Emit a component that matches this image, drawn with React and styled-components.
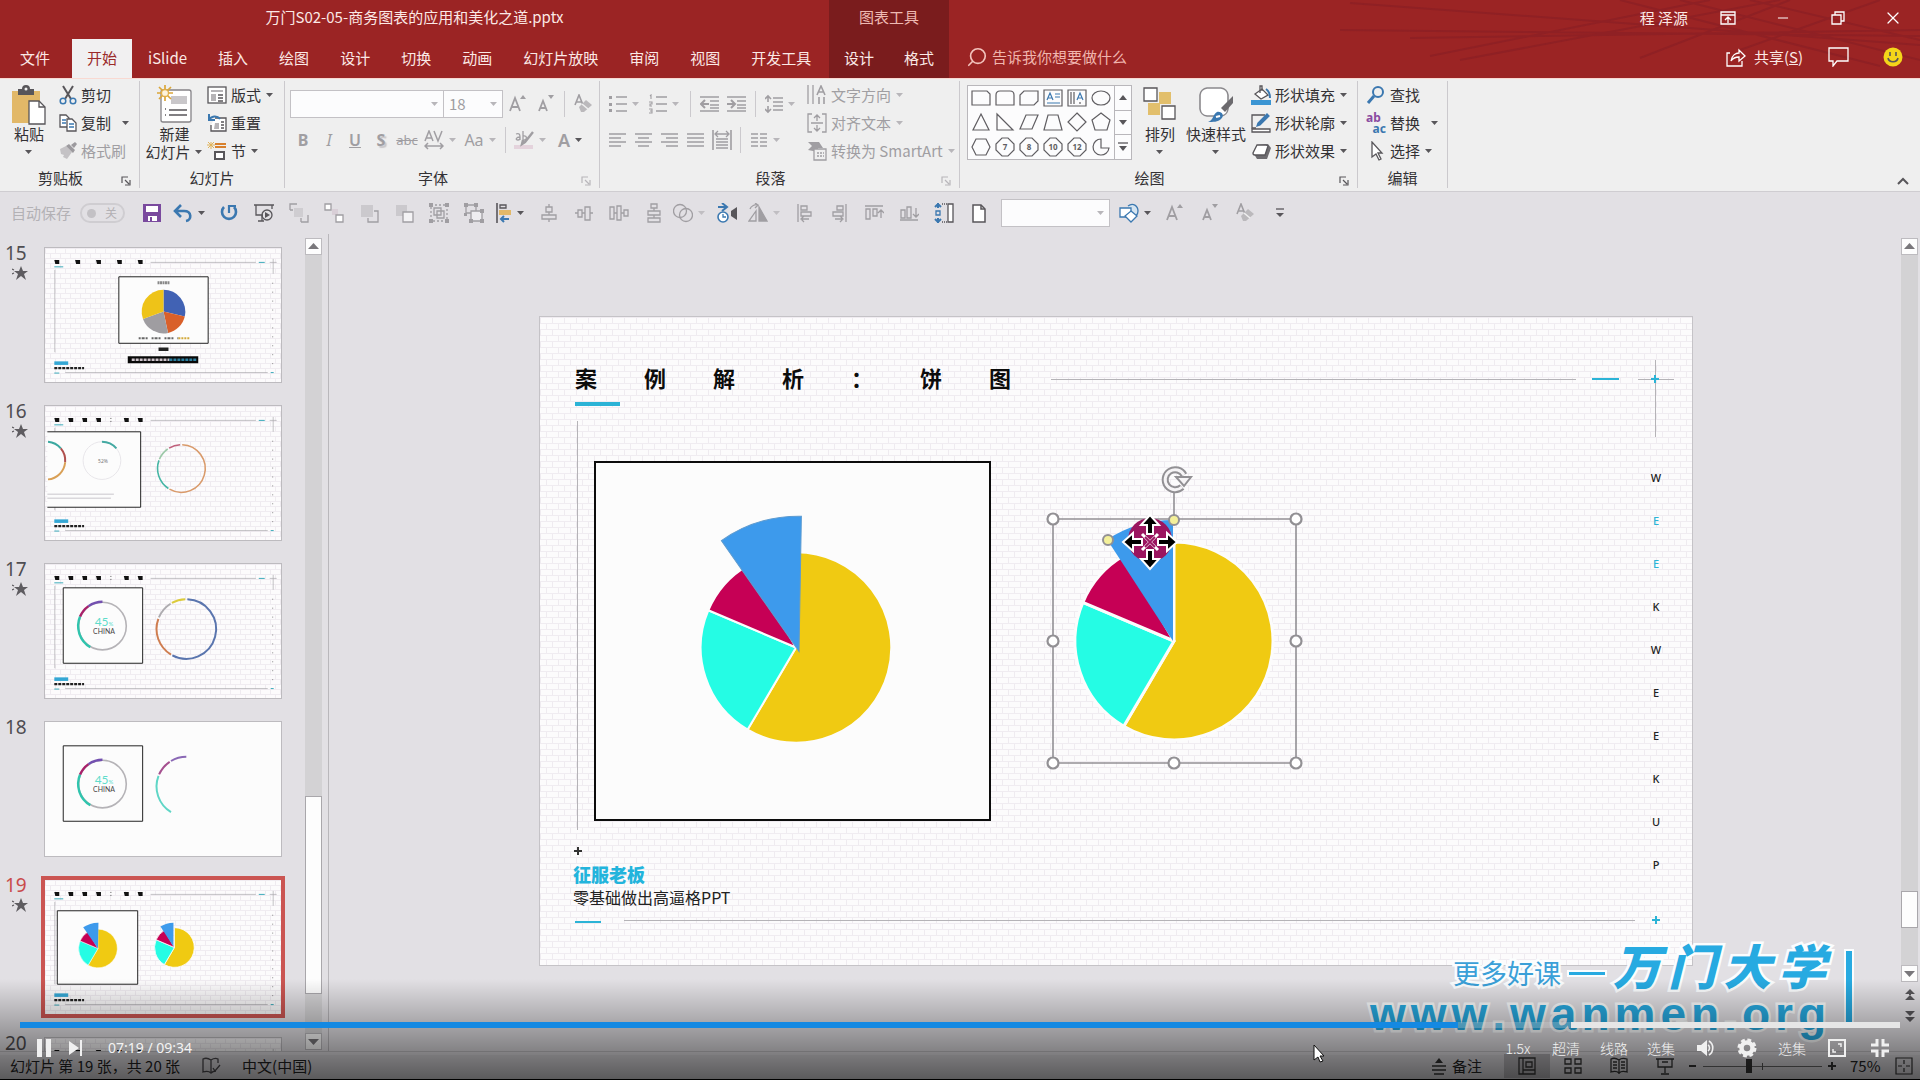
import React from 'react'
import styled, { createGlobalStyle } from 'styled-components'
import { Search, Minus, X } from 'lucide-react'

const GREY = '#a09ea2'
const DARK = '#58565a'
const BLUE = '#3b78b0'
const CYAN = '#2bb3d6'
const PIE = { yellow: '#f0ca12', teal: '#25fce4', crimson: '#c60055', blue: '#3d9aec' }

/* ---------- helpers ---------- */

const point = (cx, cy, r, deg) => {
    const a = (deg * Math.PI) / 180
    return `${(cx + r * Math.sin(a)).toFixed(2)} ${(cy - r * Math.cos(a)).toFixed(2)}`
}

const wedge = (cx, cy, r, from, to) =>
    `M${cx} ${cy}L${point(cx, cy, r, from)}A${r} ${r} 0 ${to - from > 180 ? 1 : 0} 1 ${point(cx, cy, r, to)}Z`

const arc = (cx, cy, r, from, to) =>
    `M${point(cx, cy, r, from)}A${r} ${r} 0 ${to - from > 180 ? 1 : 0} 1 ${point(cx, cy, r, to)}`

const Icon = ({ w = 20, h = 20, c = GREY, sw = 1.3, children }) => (
    <svg width={w} height={h} viewBox={`0 0 ${w} ${h}`} fill="none" stroke={c} strokeWidth={sw} aria-hidden="true">
        {children}
    </svg>
)

const Caret = ({ c = DARK }) => (
    <Icon w={10} h={6} c="none"><path d="M1 1h7L4.500 5z" fill={c} /></Icon>
)

/* ---------- ribbon icons ---------- */

const PasteIcon = () => (
    <Icon w={36} h={40} c="none">
        <path d="M1 6h28v32H1z" fill="#e2b868" />
        <path d="M7 4h4a4 4 0 0 1 8 0h4v6H7z" fill={DARK} />
        <circle cx="15" cy="4" r="1.500" fill="#efefef" />
        <path d="M18 16h10l6 6v17H18z" fill="#fff" stroke={DARK} strokeWidth="1.300" />
        <path d="M28 16v6h6" stroke={DARK} strokeWidth="1.300" />
    </Icon>
)
const CutIcon = () => (
    <Icon w={18} c={DARK} sw={2}>
        <path d="M4 1l8 13M14 1L6 14" />
        <circle cx="4" cy="16" r="2.800" stroke={BLUE} strokeWidth="1.500" />
        <circle cx="14" cy="16" r="2.800" stroke={BLUE} strokeWidth="1.500" />
    </Icon>
)
const CopyIcon = () => (
    <Icon w={18} c={DARK}>
        <path d="M1 2h6l3 3v9H1z" fill="#fff" />
        <path d="M8 6h5l4 4v8H8z" fill="#fff" />
        <path d="M3 7h4M3 10h4M10 11h5M10 14h5" stroke={BLUE} />
    </Icon>
)
const BrushIcon = () => (
    <Icon w={18} c="none">
        <path d="M1 8l6-3 6 6-5 7-4-2 1-2-3-1z" fill="#c4c2c5" />
        <path d="M7 5l3-2 6 6-2 3zM12 4l4-3 2 2-3 4z" fill="#9c9a9e" />
    </Icon>
)
const NewSlideIcon = () => (
    <Icon w={36} h={40} c={DARK}>
        <rect x="4" y="5" width="30" height="32" rx="2" fill="#fff" stroke="#858387" />
        <path d="M14 11h16v8H14z" fill="#c9c7ca" stroke="none" />
        <path d="M12 25h18M12 30h18" strokeWidth="1.600" />
        <path d="M8 24h1M8 30h1" strokeWidth="1.600" />
        <path d="M8 0v16M0 8h16M2 2l12 12M14 2L2 14" stroke="#dba73a" strokeWidth="1.700" />
        <circle cx="8" cy="8" r="3.500" fill="#fdf3dc" stroke="#e0ae48" />
    </Icon>
)
const LayoutIcon = () => (
    <Icon c={DARK}>
        <rect x="1" y="2" width="18" height="16" fill="#fff" />
        <path d="M4 5h12v2H4zM4 9h5v7H4z" fill="#b6b4b7" stroke="none" />
        <path d="M11 10h5M11 13h5M11 16h5" />
    </Icon>
)
const ResetIcon = () => (
    <Icon c={DARK}>
        <path d="M8 5h11v13H4v-6" fill="#fff" />
        <path d="M8 10h4v6H7z" fill="#b6b4b7" stroke="none" />
        <path d="M14 9h3M14 12h3M14 15h3" />
        <path d="M2 1v6h6M2 7c2-4 8-5 11-1" stroke={BLUE} strokeWidth="2" />
    </Icon>
)
const SectionIcon = () => (
    <Icon c={DARK}>
        <path d="M8 3h11M8 6h11" stroke="#d8812e" strokeWidth="2" />
        <path d="M8 11h9v7H8z" fill="#fff" strokeWidth="2" />
        <path d="M4 1v7M0 4h8M1 1l6 6M7 1L1 7" stroke="#e0b35a" strokeWidth="1" />
    </Icon>
)
const Glyph = styled.span`
    font-family: "Noto Sans", "Noto Sans CJK SC", sans-serif;
    font-size: ${(p) => p.$size || 16}px;
    line-height: 20px;
    font-weight: ${(p) => p.$weight || 400};
    font-style: ${(p) => (p.$italic ? 'italic' : 'normal')};
    text-decoration: ${(p) => p.$line || 'none'};
    text-shadow: ${(p) => (p.$shadow ? '2px 2px 1px #c9c7ca' : 'none')};
    color: ${GREY};
`
const FontSizeIcon = ({ up }) => (
    <Icon w={20} h={20} sw={1.8}>
        <path d={up ? 'M2 17L7 4l5 13M4 13h6' : 'M3 17L7 7l4 10M4 14h6'} />
        <path d={up ? 'M12 5l3-4 3 4z' : 'M12 1h6l-3 4z'} fill={GREY} stroke="none" />
    </Icon>
)
const ClearIcon = () => (
    <Icon sw={1.6}>
        <path d="M2 11L6 1l4 10M3 8h6" />
        <path d="M6 13l7-7 6 5-8 7-3 0z" fill="#bbb9bc" stroke="none" />
        <path d="M9 10l6 5" stroke="#efefef" />
    </Icon>
)
const SpacingIcon = () => (
    <Icon sw={1.5}>
        <path d="M1 11l4-10 4 10M2 8h6M10 1l4 10 4-10M1 16h18M4 13l-3 3 3 3M16 13l3 3-3 3" />
    </Icon>
)
const HighlightIcon = () => (
    <Icon>
        <path d="M0 15h19v4H0z" fill="#e4d3dc" stroke="none" />
        <path d="M2 4c3-1 4 0 4 3v3M6 7c-4 0-5 3-2 3 1 0 2-1 2-2M9 1v9c4 1 5-5 0-4" />
        <path d="M19 2l-8 10-3 2 1-4" strokeWidth="2.400" />
    </Icon>
)
const ListIcon = ({ numbered }) => (
    <Icon w={18}>
        <path d="M7 3h11M7 10h11M7 17h11" />
        {numbered
            ? <path d="M1 2l1-1v4M0 8h3v2H1v2h2M0 15h3v4H0M1 17h2" strokeWidth="1.100" />
            : <path d="M0 2h3v3H0zM0 9h3v3H0zM0 15h3v3H0z" fill={GREY} stroke="none" />}
    </Icon>
)
const IndentIcon = ({ out }) => (
    <Icon>
        <path d="M0 3h19M10 7h9M10 11h9M0 17h19M10 14h9" />
        <path d={out ? 'M9 10H2M5 6l-4 4 4 4' : 'M0 10h7M4 6l4 4-4 4'} strokeWidth="2" />
    </Icon>
)
const LineSpacingIcon = () => (
    <Icon w={18}>
        <path d="M8 4h10M8 8h10M8 12h10M8 16h10" />
        <path d="M3 8V2M0 5l3-3 3 3M3 12v6M0 15l3 3 3-3" strokeWidth="1.600" />
    </Icon>
)
const AlignIcon = ({ kind }) => {
    const rows = {
        left: 'M1 4h17M1 8h12M1 12h17M1 16h12',
        center: 'M1 4h17M4 8h11M1 12h17M4 16h11',
        right: 'M1 4h17M6 8h12M1 12h17M6 16h12',
        justify: 'M1 4h17M1 8h17M1 12h17M1 16h17',
    }
    return <Icon><path d={rows[kind]} /></Icon>
}
const DistributeTextIcon = () => (
    <Icon>
        <path d="M1 0v20M19 0v20" strokeWidth="1.600" />
        <path d="M4 4h12M6 1L3 4l3 3M14 1l3 3-3 3" />
        <path d="M4 9h12M4 12h12M4 15h12M4 18h12" strokeWidth="1.600" />
    </Icon>
)
const ColumnsIcon = () => (
    <Icon w={18}><path d="M1 4h7M1 8h7M1 12h7M1 16h7M10 4h7M10 8h7M10 12h7M10 16h7" /></Icon>
)
const TextDirIcon = () => (
    <Icon><path d="M1 0v19M6 0v19" /><path d="M10 10l4-9 4 9M11 7h6M12 12v7M17 12v7" strokeWidth="1.600" /></Icon>
)
const AlignTextIcon = () => (
    <Icon><path d="M5 1H1v18h4M15 1h4v18h-4M4 10h12M10 8V2M7 5l3-3 3 3M10 12v6M7 15l3 3 3-3" /></Icon>
)
const SmartArtIcon = () => (
    <Icon>
        <path d="M1 1h11l4 6h-5v4L1 9l4-4z" fill={GREY} stroke="none" />
        <path d="M7 8h12v11H7z" fill="#efefef" /><path d="M10 12h7M10 15h7" strokeDasharray="2 1" />
    </Icon>
)
const ArrangeIcon = () => (
    <Icon w={34} h={36} c={DARK}>
        <path d="M16 5h12v12H16zM5 16h12v12H5z" fill="#e2bf6c" stroke="none" />
        <path d="M1 1h13v13H1zM19 19h13v13H19z" fill="#fff" />
    </Icon>
)
const QuickStyleIcon = () => (
    <Icon w={36} h={38} c="#8b898d">
        <path d="M9 2h14a8 8 0 0 1 7 7v14a8 8 0 0 1-7 7H9a8 8 0 0 1-7-7V9a8 8 0 0 1 7-7z" fill="#fff" strokeWidth="1.600" />
        <path d="M35 10v7l-8 9-4-4z" fill="#6c6a6e" stroke="none" />
        <path d="M10 36c5-1 5-8 9-10 5-1 8 4 4 7-3 3-8 3-13 3z" fill={BLUE} stroke="none" />
        <path d="M18 31l4-1" stroke="#fff" strokeWidth="2" />
    </Icon>
)
const FillIcon = () => (
    <Icon c={DARK}>
        <path d="M0 15h20v5H0z" fill="#3b95d3" stroke="none" />
        <path d="M4 9l7-5 6 6-7 4z" fill="#fff" /><path d="M9 8V1h2v5" /><path d="M15 4c3 2 4 5 4 9" stroke={BLUE} strokeWidth="2" />
    </Icon>
)
const OutlineIcon = () => (
    <Icon c={DARK}>
        <path d="M14 2H1v13h4" /><path d="M1 16h18v3H1z" fill="#fff" />
        <path d="M18 3L9 12l-3 1 1-3 9-9z" fill={BLUE} stroke={BLUE} />
    </Icon>
)
const EffectIcon = () => (
    <Icon c={DARK}>
        <path d="M3 13l3-9 11-1 3 4-4 11H6z" fill="#6e6c70" stroke="none" />
        <path d="M6 4h9l2 1-3 9H4c-2 0-2-1-2-2z" fill="#fff" />
    </Icon>
)
const FindIcon = () => (
    <Icon c={BLUE} sw={2}><circle cx="12" cy="7" r="5" /><path d="M8 11l-6 7" strokeWidth="3" /></Icon>
)
const ReplaceGlyph = styled.span`
    display: grid;
    width: 20px;
    font: 700 12px/11px "Noto Sans", sans-serif;
    color: #8a4aa0;
    text-align: left;

    span {
        color: ${BLUE};
        text-align: right;
    }
`
const PointerIcon = () => (
    <Icon c={DARK}><path d="M6 1v15l4-3 3 6 2-1-3-6h4z" fill="#fff" /></Icon>
)

const SHAPES = [
    <path d="M1 3h15l3 3v11H1z" />,
    <path d="M1 17V7q0-4 4-4h10q4 0 4 4v10z" />,
    <path d="M5 3h14v10l-4 4H1V7z" />,
    <g><path d="M1 2h18v16H1z" /><path d="M4 12l3-7 3 7M5 10h4M12 6h5M12 9h5M4 15h13" stroke={BLUE} /></g>,
    <g><path d="M1 2h18v16H1zM4 4v12M7 4v12" /><path d="M10 12l3-7 3 7M11 10h4" stroke={BLUE} /><path d="M13 14v2" /></g>,
    <ellipse cx="10" cy="10" rx="9" ry="7" />,
    <path d="M10 2l8 16H2z" />,
    <path d="M2 2l16 16H2z" />,
    <path d="M7 3h12l-6 14H1z" />,
    <path d="M5 3h10l4 15H1z" />,
    <path d="M10 1l9 9-9 9-9-9z" />,
    <path d="M10 1l9 7-3 10H4L1 8z" />,
    <path d="M5 2h10l4 8-4 8H5l-4-8z" />,
    '7', '8', '10', '12',
    <path d="M10 2a8 8 0 1 0 8 9h-8z" />,
]

const ShapeCell = ({ shape }) => (
    <Icon c="#605e62" sw={1.2}>
        {typeof shape === 'string'
            ? (
                <g>
                    <path d="M7 1h6l6 6v6l-6 6H7l-6-6V7z" />
                    <text x="10" y="13" textAnchor="middle" fontSize="8" fontWeight="700" fill="#605e62" stroke="none" fontFamily="Noto Sans">{shape}</text>
                </g>
            )
            : shape}
    </Icon>
)

/* ---------- quick access icons ---------- */

const Q = {
    save: <Icon c="none"><path d="M1 1h18v18H1z" fill="#7a4a9e" /><path d="M4 3h12v6H4zM6 13h9v5H6z" fill="#fff" /><path d="M8 14h2v4H8z" fill="#7a4a9e" /></Icon>,
    undo: <Icon c={BLUE} sw={2.6}><path d="M8 2L2 8l6 6M3 8h8c8 0 8 9 2 10" /></Icon>,
    redo: <Icon c={BLUE} sw={2.6}><path d="M5 4a7 7 0 1 0 10 0" /><path d="M10 10V3h7" strokeWidth="2.200" /></Icon>,
    show: <Icon c={DARK}><path d="M0 2h20M2 2v10h7M18 2v4M4 18h6M8 12v6" /><circle cx="13" cy="12" r="5" /><path d="M11 9l5 3-5 3z" fill={DARK} stroke="none" /></Icon>,
    front: <Icon><path d="M5 5h9v9H5z" fill="#cfcdd1" stroke="none" /><path d="M1 7V1h7M12 19h7v-7M12 15v4M1 7h3" /></Icon>,
    back: <Icon><path d="M8 6h6v6H8z" fill="#d9cfd7" stroke="none" /><path d="M1 1h6v6H1zM12 12h7v7h-7z" fill="#fff" /></Icon>,
    forward: <Icon><path d="M2 2h12v12H2z" fill="#cbc9cd" stroke="none" /><path d="M15 8h4v11H9v-4" /></Icon>,
    backward: <Icon><path d="M2 2h11v11H2z" fill="#cbc9cd" stroke="none" /><path d="M9 9h10v10H9z" fill="#f4f3f5" /></Icon>,
    group: <Icon><path d="M2 2h16v16H2z" strokeDasharray="2 2" /><path d="M5 5h7v7H5zM8 8h7v7H8z" /><path d="M0 0h4v4H0zM16 0h4v4h-4zM0 16h4v4H0zM16 16h4v4h-4z" fill={GREY} stroke="none" /></Icon>,
    ungroup: <Icon><path d="M2 2h10v8H2z" /><path d="M7 8h11v10H7z" fill="#eeedf0" /><path d="M0 0h4v4H0zM10 0h4v4h-4zM0 10h3v3H0zM16 6h4v4h-4zM5 16h4v4H5zM16 16h4v4h-4z" fill={GREY} stroke="none" /></Icon>,
    align: <Icon w={16} c={DARK}><path d="M1 0v20" strokeWidth="1.600" /><path d="M4 2h6v3H4z" /><path d="M3 7h12v5H3z" fill="#e2b868" stroke="none" /><path d="M13 16H5M8 13l-3 3 3 3" stroke={BLUE} strokeWidth="2" /></Icon>,
    alignC: <Icon><path d="M10 1v3M7 4h6v5H7zM10 9v3M3 12h14v4H3zM10 16v3" /></Icon>,
    alignM: <Icon><path d="M1 10h3M4 7h4v7H4zM8 10h3M11 4h5v13h-5zM16 10h3" /></Icon>,
    distH: <Icon><path d="M1 4h4v12H1zM8 3h4v14H8zM15 7h4v6h-4zM5 10h3M12 10h3" /></Icon>,
    distV: <Icon><path d="M7 1h6v4H7zM4 8h12v4H4zM4 15h12v4H4zM10 5v3M10 12v3" /></Icon>,
    merge: <Icon><circle cx="7" cy="8" r="6.500" /><circle cx="13" cy="12" r="6.500" /></Icon>,
    anim: <Icon c={BLUE}><circle cx="6" cy="14" r="5" fill="#fff" strokeWidth="1.600" /><path d="M6 11v3h3" /><path d="M1 4h8M5 0l5 4-5 4" strokeWidth="2" /><path d="M20 4v13l-6-4V8z" fill={DARK} stroke="none" /></Icon>,
    rotate: <Icon><path d="M11 4v14h8z" fill={GREY} /><path d="M8 8v10H1z" /><path d="M2 6c1-3 5-5 8-4M7 0l3 2-3 3" /></Icon>,
    left: <Icon><path d="M4 1v18M7 3h6v4H7zM7 9h10v4H7zM15 16H8M10 13l-3 3 3 3" /></Icon>,
    right: <Icon><path d="M17 1v18M8 3h6v4H8zM4 9h10v4H4zM6 16h7M11 13l3 3-3 3" /></Icon>,
    top: <Icon><path d="M1 3h18M2 6h4v10H2zM9 6h4v7H9zM17 15V7M14 10l3-3 3 3" /></Icon>,
    bottom: <Icon><path d="M1 17h18M2 7h4v8H2zM8 4h4v11H8zM17 5v9M14 11l3 3 3-3" /></Icon>,
    height: <Icon c={BLUE}><path d="M4 0v5M1 4l3-3 3 3M4 20v-5M1 16l3 3 3-3" strokeWidth="2" /><path d="M2 8h4v4H2z" /><path d="M8 1h5M8 19h5" strokeDasharray="1 1" stroke={DARK} /><path d="M14 1h5v18h-5z" fill="#fff" stroke={DARK} /></Icon>,
    page: <Icon w={16} c={DARK} sw={1.5}><path d="M2 2h8l4 4v13H2z" fill="#fff" /><path d="M10 2v4h4" /></Icon>,
    shape: <Icon c={BLUE}><path d="M9 3c5-4 10 0 10 5 0 4-3 6-5 6" fill="#d5e4f0" /><path d="M1 5h11v9H1z" fill="#fff" /><path d="M12 8l6 5-6 6-6-6z" fill="#fff" /></Icon>,
    more: <Icon w={12} h={12} c={DARK}><path d="M2 2h8" /><path d="M2 6h8l-4 4z" fill={DARK} stroke="none" /></Icon>,
}

const QAT = [
    ['保存', 'save', 35], ['撤消', 'undo', 42, DARK], ['重复', 'redo', 35], ['从头开始放映', 'show', 35],
    ['置于顶层', 'front', 35], ['置于底层', 'back', 35], ['上移一层', 'forward', 35], ['下移一层', 'backward', 35],
    ['组合', 'group', 35], ['取消组合', 'ungroup', 35], ['对齐', 'align', 40, DARK], ['水平居中', 'alignC', 35],
    ['垂直居中', 'alignM', 35], ['横向分布', 'distH', 35], ['纵向分布', 'distV', 35], ['合并形状', 'merge', 38, '#c0bec2'],
    ['动画计时', 'anim', 35], ['旋转', 'rotate', 42, '#c0bec2'], ['左对齐', 'left', 35], ['右对齐', 'right', 35],
    ['顶端对齐', 'top', 35], ['底端对齐', 'bottom', 35], ['高度', 'height', 35], ['新建', 'page', 35],
]

/* ---------- slide parts ---------- */

const PieSlices = ({ cx, cy, r, gap = 2 }) => (
    <g stroke="#fcfcfc" strokeWidth={gap} strokeLinejoin="round">
        <path d={wedge(cx, cy, r, 0, 210.5)} fill={PIE.yellow} />
        <path d={wedge(cx, cy, r, 210.5, 293)} fill={PIE.teal} />
        <path d={wedge(cx, cy, r, 293, 330)} fill={PIE.crimson} />
    </g>
)

const Ring = ({ cx, cy, r, parts, w = 1.6 }) => (
    <g fill="none" strokeWidth={w}>
        {parts.map(([from, to, color]) => <path key={from} d={arc(cx, cy, r, from, to)} stroke={color} />)}
    </g>
)

const ThumbFrame = ({ blocks, bare, children }) => (
    <svg width="100%" height="100%" viewBox="0 0 237 135" aria-hidden="true">
        {!bare && (
            <g>
                {blocks.map((x) => <path key={x} d={`M${x - 2} 12h5v4h-4z`} fill="#111" />)}
                {blocks.length > 5 && <path d="M66 12v1M66 15v1" stroke="#555" />}
                <path d="M106 14.500h106M226 14.500h7M229.500 11v15M9.500 22v83M20 125.500h204" stroke="#aaa8ac" strokeWidth="0.700" />
                <path d="M9 19h9M215 14.500h6M9 126h5M227 125.500h3" stroke="#3aa9b9" />
                <path d="M9 116h14" stroke="#35a7d4" strokeWidth="3.600" />
                <path d="M9 121h30" stroke="#222" strokeWidth="2.400" strokeDasharray="3 1" />
                <path d="M229 35v82" stroke="#888" strokeDasharray="1 8" />
            </g>
        )}
        {children}
    </svg>
)

const FIVE = [11, 32, 53, 74, 95]
const SIX = [11, 25, 39, 53, 81, 95]
const ChinaRing = () => (
    <g>
        <path d="M18 24h80v76H18z" fill="#fcfcfc" stroke="#222" />
        <circle cx="57.500" cy="62.500" r="24" fill="none" stroke="#b5b3b7" strokeWidth="1.600" />
        <Ring cx={57.5} cy={62.5} r={24.5} w={2.4} parts={[[210, 293, '#2fc4ad'], [293, 325, '#a8206a'], [325, 360, '#7350b0']]} />
        <text x="59" y="62" textAnchor="middle" fontSize="12" fill="#5fdccb" fontFamily="Lato">45<tspan fontSize="6">%</tspan></text>
        <text x="59" y="71" textAnchor="middle" fontSize="7" fill="#444" fontFamily="Lato">CHINA</text>
    </g>
)

const THUMBS = [
    {
        n: 15, star: true, art: (
            <ThumbFrame blocks={FIVE}>
                <path d="M74 29h90v67H74z" fill="#fcfcfc" stroke="#222" />
                <path d={wedge(119, 64, 22, 0, 103)} fill="#4162b4" />
                <path d={wedge(119, 64, 22, 103, 168)} fill="#d9602a" />
                <path d={wedge(119, 64, 22, 168, 250)} fill="#9f9da1" />
                <path d={wedge(119, 64, 22, 250, 360)} fill="#eec318" />
                <path d="M113 35h12" stroke="#888" strokeWidth="3" strokeDasharray="2 .5" />
                <path d="M94 91h40" stroke="#666" strokeWidth="2" strokeDasharray="2 1 3 1 2 4" />
                <path d="M134 91h11" stroke="#d2a93a" strokeWidth="2" strokeDasharray="2 1" />
                <path d="M114 102h10" stroke="#222" strokeWidth="3.500" />
                <path d="M83 109h71v7H83z" fill="#080808" />
                <path d="M87 112.500h38" stroke="#cfc4cc" strokeWidth="2.500" strokeDasharray="3 1" />
                <path d="M125 112.500h27" stroke="#2c7f9f" strokeWidth="2.500" strokeDasharray="3 1" />
            </ThumbFrame>
        ),
    },
    {
        n: 16, star: true, art: (
            <ThumbFrame blocks={SIX}>
                <path d="M2 26h94v76H2z" fill="#fcfcfc" stroke="none" />
                <path d="M2 26h94v76H2" fill="none" stroke="#222" />
                <Ring cx={1} cy={55} r={19} w={2} parts={[[5, 50, '#3aa8a0'], [50, 95, '#b0504e'], [95, 175, '#d9a056']]} />
                <circle cx="57" cy="55" r="19" fill="none" stroke="#e8e6ea" />
                <Ring cx={57} cy={55} r={19} w={2} parts={[[0, 50, '#44a9a2']]} />
                <text x="58" y="57" textAnchor="middle" fontSize="5" fill="#777" fontFamily="Noto Sans">52%</text>
                <path d="M2 89h67M2 93h64" stroke="#dad8dc" strokeWidth="1.500" />
                <Ring cx={137} cy={63} r={24} parts={[[2, 210, '#d99a6a'], [213, 290, '#45b5a4'], [293, 325, '#9cc8a8'], [329, 357, '#c0607c']]} />
            </ThumbFrame>
        ),
    },
    {
        n: 17, star: true, art: (
            <ThumbFrame blocks={SIX}>
                <ChinaRing />
                <Ring cx={142} cy={65.5} r={30} w={2} parts={[[2, 208, '#5a75ae'], [211, 290, '#cf7d50'], [293, 328, '#aeacb0'], [331, 358, '#dccb3c']]} />
            </ThumbFrame>
        ),
    },
    {
        n: 18, bare: true, art: (
            <ThumbFrame bare>
                <ChinaRing />
                <Ring cx={142} cy={65} r={30} w={2} parts={[[211, 291, '#5fd6c6'], [294, 326, '#a5508f'], [329, 360, '#8a68b5']]} />
            </ThumbFrame>
        ),
    },
    {
        n: 19, star: true, active: true, art: (
            <ThumbFrame blocks={SIX}>
                <path d="M12 31h81v74H12z" fill="#fcfcfc" stroke="#222" />
                <PieSlices cx={53} cy={69} r={19.5} gap={0.5} />
                <path d={wedge(53, 69, 26, 325, 361)} fill={PIE.blue} />
                <PieSlices cx={130} cy={68} r={20} gap={0.8} />
                <path d={wedge(129, 67, 24, 327, 360)} fill={PIE.blue} />
            </ThumbFrame>
        ),
    },
    { n: 20, art: <ThumbFrame blocks={FIVE} /> },
]

/* ---------- app ---------- */

const Option = ({ icon, text, caret, off, wide }) => (
    <OptionButton $off={off} $wide={wide}>
        {icon}
        <span>{text}</span>
        {caret && <Caret c={off ? '#b8b6ba' : DARK} />}
    </OptionButton>
)

const Group = ({ width, label, launcher, off, children }) => (
    <GroupBox $width={width}>
        <GroupBody>{children}</GroupBody>
        <GroupFoot>
            <GroupLabel>{label}</GroupLabel>
            {launcher && (
                <Launcher aria-label={`${label}设置`}>
                    <Icon w={10} h={10} c={off ? '#b8b6ba' : DARK} sw={1.2}><path d="M1 7V1h6M4 4l4 4M9 4v5H4" /></Icon>
                </Launcher>
            )}
        </GroupFoot>
    </GroupBox>
)

const Tool = ({ name, w = 26, caret, children }) => (
    <ToolButton aria-label={name} $w={w}>
        {children}
        {caret && <Caret c={caret} />}
    </ToolButton>
)

const Scroll = ({ before, thumb, after, extra }) => (
    <ScrollColumn $edge={extra}>
        <ScrollButton aria-label="向上滚动"><Icon w={11} h={7} c="none"><path d="M0 6h11L5.500 0z" fill="#79777b" /></Icon></ScrollButton>
        <Track $grow={before} />
        <Thumb $grow={thumb} />
        <Track $grow={after} />
        <ScrollButton aria-label="向下滚动"><Icon w={11} h={7} c="none"><path d="M0 1h11L5.500 7z" fill="#79777b" /></Icon></ScrollButton>
        {extra && (
            <PageButtons>
                <ToolButton aria-label="上一张" $w={17}><Icon w={10} h={12} c="none"><path d="M0 5h10L5 0zM0 11h10L5 6zM4 5h2v2H4z" fill={DARK} /></Icon></ToolButton>
                <ToolButton aria-label="下一张" $w={17}><Icon w={10} h={12} c="none"><path d="M0 1h10L5 6zM0 7h10l-5 5z" fill={DARK} /></Icon></ToolButton>
            </PageButtons>
        )}
    </ScrollColumn>
)

const Spaced = ({ as, text, ...rest }) => (
    <SpacedRow as={as} {...rest}>
        {text.split('').map((ch, i) => <span key={i}>{ch}</span>)}
    </SpacedRow>
)

function App() {
    return (
        <Page>
            <GlobalStyle />
            <Header>
                <TabArea>
                    <FileName>万门S02-05-商务图表的应用和美化之道.pptx</FileName>
                    <Tabs>
                        <Tab>文件</Tab>
                        <Tab $active>开始</Tab>
                        {['iSlide', '插入', '绘图', '设计', '切换', '动画', '幻灯片放映', '审阅', '视图', '开发工具'].map((t) => (
                            <Tab key={t}>{t}</Tab>
                        ))}
                    </Tabs>
                </TabArea>
                <ContextArea>
                    <ContextTitle>图表工具</ContextTitle>
                    <ContextTabs>
                        <Tab>设计</Tab>
                        <Tab>格式</Tab>
                    </ContextTabs>
                </ContextArea>
                <WindowArea>
                    <HeaderArt viewBox="0 0 600 78" preserveAspectRatio="none" aria-hidden="true">
                        <path d="M30 3l570 42M20 30l580 6M90 38l510-8M110 56L390 0M140 60L460 0M360 0l240 60M430 0l170 40M320 58L470 0M300 0l260 66M420 50L560 0" />
                    </HeaderArt>
                    <WindowRow>
                        <User>程 泽源</User>
                        <WinButton aria-label="功能区显示选项"><Icon w={16} h={16} c="#fff"><path d="M1 2h14v12H1zM1 5h14M8 13V7M5 10l3-3 3 3" /></Icon></WinButton>
                        <WinButton aria-label="最小化"><Minus size={16} strokeWidth={1.5} /></WinButton>
                        <WinButton aria-label="还原"><Icon w={16} h={16} c="#fff"><path d="M2 5h9v9H2zM5 5V2h9v9h-3" /></Icon></WinButton>
                        <WinButton aria-label="关闭"><X size={20} strokeWidth={1.5} /></WinButton>
                    </WindowRow>
                    <SearchRow>
                        <TellMe>
                            <FlippedSearch size={22} strokeWidth={1.8} />
                            <TellInput aria-label="告诉我你想要做什么" placeholder="告诉我你想要做什么" />
                        </TellMe>
                        <ShareArea>
                            <ShareButton $gap={8}>
                                <Icon c="#fff"><path d="M4 6H1v13h15v-5M5 14c1-6 5-8 8-8V3l6 6-6 5v-4c-3 0-6 1-8 4z" /></Icon>
                                <span>共享(<u>S</u>)</span>
                            </ShareButton>
                            <ShareButton aria-label="批注"><Icon w={22} h={20} c="#fff"><path d="M1 1h19v13H9l-4 5v-5H1z" /></Icon></ShareButton>
                            <ShareButton aria-label="反馈" $pad={16}>
                                <Icon c={DARK}><circle cx="10" cy="10" r="9.500" fill="#f4d61a" stroke="none" /><path d="M7 5v4M13 5v4M5 11c1 5 9 5 10 0" strokeWidth="1.600" /></Icon>
                            </ShareButton>
                        </ShareArea>
                    </SearchRow>
                </WindowArea>
            </Header>

            <Ribbon>
                <Group width={140} label="剪贴板" launcher>
                    <BigButton $w={48}><PasteIcon /><span>粘贴</span><Caret /></BigButton>
                    <Stack>
                        <Option icon={<CutIcon />} text="剪切" />
                        <Option icon={<CopyIcon />} text="复制" caret wide />
                        <Option icon={<BrushIcon />} text="格式刷" off />
                    </Stack>
                </Group>
                <Group width={145} label="幻灯片">
                    <BigButton $w={59}>
                        <NewSlideIcon />
                        <span>新建</span>
                        <CaretLine>幻灯片<Caret /></CaretLine>
                    </BigButton>
                    <Stack $flush>
                        <Option icon={<LayoutIcon />} text="版式" caret />
                        <Option icon={<ResetIcon />} text="重置" />
                        <Option icon={<SectionIcon />} text="节" caret />
                    </Stack>
                </Group>
                <Group width={315} label="字体" launcher off>
                    <ToolRows>
                        <ToolRow>
                            <Combo $w={154}><select aria-label="字体"><option></option></select><Caret c="#b8b6ba" /></Combo>
                            <Combo $w={60}><select aria-label="字号"><option>18</option></select><Caret c="#b8b6ba" /></Combo>
                            <Tool name="增大字号" w={30}><FontSizeIcon up /></Tool>
                            <Tool name="减小字号" w={26}><FontSizeIcon /></Tool>
                            <Divider />
                            <Tool name="清除格式" w={26}><ClearIcon /></Tool>
                        </ToolRow>
                        <ToolRow>
                            <Tool name="加粗"><Glyph $weight={700}>B</Glyph></Tool>
                            <Tool name="倾斜"><Glyph $italic>I</Glyph></Tool>
                            <Tool name="下划线"><Glyph $weight={600} $line="underline">U</Glyph></Tool>
                            <Tool name="阴影"><Glyph $weight={700} $shadow>S</Glyph></Tool>
                            <Tool name="删除线"><Glyph $size={13} $line="line-through">abc</Glyph></Tool>
                            <Tool name="字符间距" w={42} caret="#b8b6ba"><SpacingIcon /></Tool>
                            <Tool name="更改大小写" w={38} caret="#b8b6ba"><Glyph>Aa</Glyph></Tool>
                            <Divider />
                            <Tool name="突出显示" w={40} caret="#b8b6ba"><HighlightIcon /></Tool>
                            <Tool name="字体颜色" w={40} caret={DARK}><Glyph $size={18} $weight={600}>A</Glyph></Tool>
                        </ToolRow>
                    </ToolRows>
                </Group>
                <Group width={360} label="段落" launcher off>
                    <ToolRows>
                        <ToolRow>
                            <Tool name="项目符号" w={40} caret="#b8b6ba"><ListIcon /></Tool>
                            <Tool name="编号" w={40} caret="#b8b6ba"><ListIcon numbered /></Tool>
                            <Divider />
                            <Tool name="降低列表级别" w={28}><IndentIcon out /></Tool>
                            <Tool name="提高列表级别" w={26}><IndentIcon /></Tool>
                            <Divider />
                            <Tool name="行距" w={40} caret="#b8b6ba"><LineSpacingIcon /></Tool>
                        </ToolRow>
                        <ToolRow>
                            <Tool name="左对齐"><AlignIcon kind="left" /></Tool>
                            <Tool name="居中"><AlignIcon kind="center" /></Tool>
                            <Tool name="右对齐"><AlignIcon kind="right" /></Tool>
                            <Tool name="两端对齐"><AlignIcon kind="justify" /></Tool>
                            <Tool name="分散对齐"><DistributeTextIcon /></Tool>
                            <Divider />
                            <Tool name="分栏" w={40} caret="#b8b6ba"><ColumnsIcon /></Tool>
                        </ToolRow>
                    </ToolRows>
                    <Stack $end>
                        <Option icon={<TextDirIcon />} text="文字方向" caret off />
                        <Option icon={<AlignTextIcon />} text="对齐文本" caret off />
                        <Option icon={<SmartArtIcon />} text="转换为 SmartArt" caret off />
                    </Stack>
                </Group>
                <Group width={398} label="绘图" launcher>
                    <Gallery>
                        <ShapeGrid>
                            {SHAPES.map((shape, i) => <ShapeButton key={i} aria-label={`形状 ${i + 1}`}><ShapeCell shape={shape} /></ShapeButton>)}
                        </ShapeGrid>
                        <GalleryScroll>
                            <button aria-label="上一行"><Icon w={8} h={6} c="none"><path d="M0 5h8L4 0z" fill={DARK} /></Icon></button>
                            <button aria-label="下一行"><Icon w={8} h={6} c="none"><path d="M0 0h8L4 5z" fill={DARK} /></Icon></button>
                            <button aria-label="其他形状"><Icon w={10} h={10} c={DARK}><path d="M0 1h10" /><path d="M1 4h8L5 9z" fill={DARK} stroke="none" /></Icon></button>
                        </GalleryScroll>
                    </Gallery>
                    <BigButton $w={48}><ArrangeIcon /><span>排列</span><Caret /></BigButton>
                    <BigButton $w={64}><QuickStyleIcon /><span>快速样式</span><Caret /></BigButton>
                    <Stack $flush>
                        <Option icon={<FillIcon />} text="形状填充" caret />
                        <Option icon={<OutlineIcon />} text="形状轮廓" caret />
                        <Option icon={<EffectIcon />} text="形状效果" caret />
                    </Stack>
                </Group>
                <Group width={90} label="编辑">
                    <Stack $flush>
                        <Option icon={<FindIcon />} text="查找" />
                        <Option icon={<ReplaceGlyph>ab<span>ac</span></ReplaceGlyph>} text="替换" caret wide />
                        <Option icon={<PointerIcon />} text="选择" caret />
                    </Stack>
                </Group>
                <Collapse aria-label="折叠功能区"><Icon w={12} h={8} c={DARK} sw={2}><path d="M1 7l5-5 5 5" /></Icon></Collapse>
            </Ribbon>

            <QuickBar>
                <AutoSave>
                    自动保存
                    <input type="checkbox" />
                    <Switch><i />关</Switch>
                </AutoSave>
                {QAT.map(([name, key, w, caret]) => (
                    <Tool key={key} name={name} w={w} caret={caret}>{Q[key]}</Tool>
                ))}
                <Combo $w={109} $margin><select aria-label="样式"><option></option></select><Caret c="#b8b6ba" /></Combo>
                <Tool name="形状" w={42} caret={DARK}>{Q.shape}</Tool>
                <Tool name="增大字号" w={35}><FontSizeIcon up /></Tool>
                <Tool name="减小字号" w={35}><FontSizeIcon /></Tool>
                <Tool name="清除格式" w={35}><ClearIcon /></Tool>
                <Tool name="自定义快速访问工具栏" w={35}>{Q.more}</Tool>
            </QuickBar>

            <Workspace>
                <ThumbPane>
                    <ThumbList>
                        {THUMBS.map((t) => (
                            <ThumbItem key={t.n}>
                                <ThumbNumber $active={t.active}>
                                    {t.n}
                                    {t.star && <Icon w={16} h={14} c="none"><path d="M9 0l2 5h5l-4 3 2 6-5-4-5 4 2-6-4-3h5z" fill="#5e5c60" /><path d="M0 3l2 1M0 8l2-1" stroke="#5e5c60" /></Icon>}
                                </ThumbNumber>
                                <ThumbSlide $active={t.active} $bare={t.bare} aria-label={`幻灯片 ${t.n}`}>{t.art}</ThumbSlide>
                            </ThumbItem>
                        ))}
                    </ThumbList>
                    <Scroll before={542} thumb={197} after={39} />
                </ThumbPane>
                <Stage>
                    <Slide>
                        <SlideTitle><Spaced text="案例解析：饼图" $gap={47} /></SlideTitle>
                        <Line $x={35} $y={85} $w={45} $h={4} $c={CYAN} />
                        <Line $x={511} $y={62} $w={525} $h={1} />
                        <Line $x={1052} $y={61} $w={27} $h={2} $c={CYAN} />
                        <Line $x={1098} $y={62} $w={36} $h={1} />
                        <Line $x={1115} $y={43} $w={1} $h={77} />
                        <Line $x={37} $y={104} $w={1} $h={409} />
                        <Line $x={35} $y={604} $w={26} $h={2} $c={CYAN} />
                        <Line $x={84} $y={603} $w={1011} $h={1} />
                        <Mark $x={1111} $y={58} $c={CYAN} />
                        <Mark $x={34} $y={530} $c="#333" />
                        <Mark $x={1112} $y={599} $c={CYAN} />
                        <ChartFrame>
                            <svg width="100%" height="100%" viewBox="0 0 391 355" role="img" aria-label="饼图">
                                <PieSlices cx={199} cy={184} r={95} />
                                <path d={wedge(202, 188, 135, 325, 361)} fill={PIE.blue} stroke="#5d9bd0" />
                            </svg>
                        </ChartFrame>
                        <Selection viewBox="0 0 270 320" role="img" aria-label="选中的饼图">
                            <PieSlices cx={134} cy={181} r={99} gap={3} />
                            <path d={wedge(133, 181, 121, 327, 360)} fill={PIE.blue} />
                            <g fill="none" stroke="#929094" strokeWidth="1.600">
                                <path d="M13 59h243v244H13zM134 33v26" />
                                <path d="M142 27A10 10 0 1 1 144 15" strokeWidth="7" />
                                <path d="M142 27A10 10 0 1 1 144 15" stroke="#f6f4f6" strokeWidth="3" />
                                <path d="M136 17h15l-7 9z" fill="#f6f4f6" strokeWidth="2" />
                                {[[13, 59], [256, 59], [13, 181], [256, 181], [13, 303], [134, 303], [256, 303]].map(([x, y]) => (
                                    <circle key={`${x}-${y}`} cx={x} cy={y} r="5.500" fill="#fff" strokeWidth="2.200" />
                                ))}
                                <circle cx="134" cy="60" r="5" fill="#f4f09a" strokeWidth="2" />
                                <circle cx="68" cy="80" r="5" fill="#f4f09a" strokeWidth="2" />
                            </g>
                            <circle cx="110" cy="80" r="22" fill="#9b1560" />
                            {[0, 90, 180, 270].map((a) => (
                                <g key={a} transform={`rotate(${a} 110 82)`}>
                                    <path d="M110 55l9 10h-6v9h-6v-9h-6z" fill="#000" stroke="#fff" strokeWidth="2" />
                                </g>
                            ))}
                            <path d="M102 74l16 16M118 74l-16 16" stroke="#fff" strokeWidth="3" />
                            <path d="M105 77l10 10M115 77l-10 10" stroke="#9b1560" strokeWidth="1.800" />
                        </Selection>
                        <SideLetters>
                            {'WEEKWEEKUP'.split('').map((ch, i) => <SideLetter key={i} $lit={i === 1 || i === 2}>{ch}</SideLetter>)}
                        </SideLetters>
                        <Caption>
                            <strong>征服老板</strong>
                            零基础做出高逼格PPT
                        </Caption>
                    </Slide>
                </Stage>
                <Scroll before={639} thumb={35} after={37} extra />
            </Workspace>

            <StatusBar>
                <span>幻灯片 第 19 张，共 20 张</span>
                <ToolButton aria-label="拼写检查" $w={62}><Icon c="#4a484c"><path d="M10 4v12M10 4C7 2 4 2 2 3v13c3-1 6-1 8 1 1-1 3-2 5-2M10 4c3-2 5-2 7-1v4M12 12l2 3 5-6" /></Icon></ToolButton>
                <span>中文(中国)</span>
                <Spring />
                <NotesButton>
                    <Icon w={14} h={18} c="#333" sw={1.6}><path d="M7 1l4 5H3z" fill="#333" stroke="none" /><path d="M0 9h14M0 13h14M2 17h10" /></Icon>
                    备注
                </NotesButton>
                <ViewButton aria-label="普通视图" $active><Icon w={18} h={18} c="#333"><path d="M1 1h16v16H1zM5 1v16M8 5h6v5H8zM5 13h12" /></Icon></ViewButton>
                <ViewButton aria-label="幻灯片浏览"><Icon w={18} h={18} c="#333"><path d="M1 2h6v5H1zM11 2h6v5h-6zM1 11h6v5H1zM11 11h6v5h-6z" /></Icon></ViewButton>
                <ViewButton aria-label="阅读视图"><Icon w={18} h={18} c="#333"><path d="M9 3v14M9 3C6 1 3 1 1 2v13c3-1 6-1 8 1 2-2 5-2 8-1V2c-3-1-6-1-8 1M3 5h4M3 8h4M3 11h4M11 5h4M11 8h4M11 11h4" /></Icon></ViewButton>
                <ViewButton aria-label="幻灯片放映"><Icon w={18} h={18} c="#333"><path d="M0 2h18M2 2v8h14V2M9 10v6M5 17h8M6 5h6" /></Icon></ViewButton>
                <ZoomButton aria-label="缩小"><Icon w={10} h={10} c="#333" sw={2}><path d="M1 5h7" /></Icon></ZoomButton>
                <ZoomSlider type="range" min="10" max="400" defaultValue="160" aria-label="缩放" />
                <ZoomButton aria-label="放大"><Icon w={10} h={10} c="#333" sw={2}><path d="M1 5h8M5 1v8" /></Icon></ZoomButton>
                <ZoomValue>75%</ZoomValue>
                <ZoomButton aria-label="适应窗口"><Icon w={18} h={18} c="#333" sw={1.2}><path d="M1 1h16v16H1zM9 3v4M9 11v4M3 9h4M11 9h4" /></Icon></ZoomButton>
            </StatusBar>

            <Watermark>
                <WatermarkText>
                    <WatermarkTop>
                        <Slogan>更多好课<Dash /></Slogan>
                        <Spaced as={Brand} text="万门大学" $gap={7} />
                    </WatermarkTop>
                    <Spaced as={Site} text="www.wanmen.org" $gap={5} />
                </WatermarkText>
                <WatermarkBar />
            </Watermark>

            <Player>
                <Progress type="range" min="0" max="574" defaultValue="439" aria-label="播放进度" />
                <PlayerRow>
                    <PlayerButton aria-label="暂停" $w={40}><Icon w={14} h={18} c="none"><path d="M0 0h5v18H0zM9 0h5v18H9z" fill="#f0f0f0" /></Icon></PlayerButton>
                    <PlayerButton aria-label="下一个" $w={24}><Icon w={14} h={16} c="none"><path d="M0 1l10 7-10 7zM11 0h2v16h-2z" fill="#f0f0f0" /></Icon></PlayerButton>
                    <Time>07:19 / 09:34</Time>
                    <Spring />
                    <PlayerButton $w={48}>1.5x</PlayerButton>
                    <PlayerButton $w={48}>超清</PlayerButton>
                    <PlayerButton $w={48}>线路</PlayerButton>
                    <PlayerButton $w={46}>选集</PlayerButton>
                    <PlayerButton aria-label="音量" $w={42}><Icon w={18} h={18} c="#f0f0f0"><path d="M1 6h4l6-5v16l-6-5H1z" fill="#f0f0f0" stroke="none" /><path d="M12 6c2 1 2 5 0 6M13 2c5 3 5 11 0 14" strokeWidth="1.600" /></Icon></PlayerButton>
                    <PlayerButton aria-label="设置" $w={42}>
                        <Icon c="#f0f0f0"><circle cx="10" cy="10" r="5.500" strokeWidth="4.500" /><circle cx="10" cy="10" r="8" strokeWidth="3" strokeDasharray="3.800 2.500" /></Icon>
                    </PlayerButton>
                    <PlayerButton $w={48}>选集</PlayerButton>
                    <PlayerButton aria-label="全屏" $w={42}><Icon w={18} h={18} c="#f0f0f0" sw={2}><path d="M1 1h16v16H1z" /><path d="M10 5h3v3M5 10v3h3" strokeWidth="1.500" /></Icon></PlayerButton>
                    <PlayerButton aria-label="退出网页全屏" $w={44}><Icon c="#f0f0f0" sw={3}><path d="M1 7h6V1M13 1v6h6M19 13h-6v6M7 19v-6H1" /></Icon></PlayerButton>
                </PlayerRow>
            </Player>
            <Pointer viewBox="0 0 12 20" aria-hidden="true"><path d="M1 1v15l4-3 2 5 3-1-3-5h4z" fill="#fff" stroke="#111" /></Pointer>
        </Page>
    )
}
export default App

/* ---------- styles ---------- */

const GlobalStyle = createGlobalStyle`
    * {
        box-sizing: border-box;
    }
    body {
        margin: 0;
        overflow: hidden;
        background: #000;
        font: 15px/20px "Noto Sans CJK SC", "Noto Sans", sans-serif;
        color: #333134;
    }
    button, input, select {
        font: inherit;
        color: inherit;
        border: 0;
        padding: 0;
        margin: 0;
        background: none;
    }
    svg {
        display: block;
        flex: none;
    }
`
const Page = styled.div`
    position: relative;
    display: flex;
    flex-direction: column;
    height: 100vh;
    border-bottom: 1px solid #000;
    background: #e2e0e4;
    overflow: hidden;
    white-space: nowrap;
`
const Header = styled.header`
    display: flex;
    flex: none;
    height: 78px;
    background: #9b2424;
    color: #fbe9e6;
`
const TabArea = styled.div`
    display: flex;
    flex-direction: column;
    justify-content: space-between;
    width: 829px;
`
const FileName = styled.div`
    padding-top: 7px;
    text-align: center;
`
const Tabs = styled.nav`
    display: flex;
    gap: 1px;
    padding-left: 5px;
`
const Tab = styled.button`
    height: 39px;
    padding: 0 15px 2px;
    color: ${(p) => (p.$active ? '#9b2a2a' : '#fbe9e6')};
    background: ${(p) => (p.$active ? '#f1f0f1' : 'transparent')};

    &:first-child {
        margin-right: 6px;
    }
`
const ContextArea = styled.div`
    display: flex;
    flex-direction: column;
    justify-content: space-between;
    width: 120px;
    background: #7a1c1d;
`
const ContextTitle = styled.div`
    padding-top: 7px;
    text-align: center;
    color: #eeb9b2;
`
const ContextTabs = styled.nav`
    display: flex;

    ${Tab} {
        flex: 1;
        margin: 0;
    }
`
const WindowArea = styled.div`
    position: relative;
    display: flex;
    flex: 1;
    flex-direction: column;
`
const HeaderArt = styled.svg`
    position: absolute;
    top: 0;
    right: 0;
    width: 600px;
    height: 78px;
    fill: none;
    stroke: #8f2024;
    stroke-width: 2;
`
const WindowRow = styled.div`
    position: relative;
    display: flex;
    justify-content: flex-end;
    align-items: center;
    height: 35px;
`
const User = styled.span`
    padding-right: 12px;
`
const WinButton = styled.button`
    display: grid;
    place-items: center;
    width: 55px;
    color: #fff;
`
const SearchRow = styled.div`
    position: relative;
    display: flex;
    justify-content: space-between;
    align-items: center;
    height: 43px;
    padding: 0 17px;
`
const TellMe = styled.label`
    display: flex;
    align-items: center;
    gap: 4px;
    color: #f3c3bd;
`
const FlippedSearch = styled(Search)`
    transform: scaleX(-1);
`
const TellInput = styled.input`
    width: 200px;
    outline: 0;

    &::placeholder {
        color: #f0b5ae;
        opacity: 1;
    }
`
const ShareArea = styled.div`
    display: flex;
    align-items: center;
    gap: 17px;
`
const ShareButton = styled.button`
    display: flex;
    align-items: center;
    gap: ${(p) => p.$gap || 0}px;
    color: #fbe9e6;
    padding-left: ${(p) => p.$pad || 8}px;
`
const Ribbon = styled.section`
    position: relative;
    display: flex;
    flex: none;
    height: 114px;
    padding-top: 2px;
    border-top: 1px solid #f9d9d2;
    border-bottom: 1px solid #cfcdd1;
    background: #efefef;
`
const GroupBox = styled.div`
    display: flex;
    flex-direction: column;
    width: ${(p) => p.$width}px;
    height: 107px;
    border-right: 1px solid #cbc9cd;
`
const GroupBody = styled.div`
    display: flex;
    flex: 1;
    padding-left: 5px;
`
const GroupFoot = styled.div`
    display: flex;
    align-items: center;
    height: 20px;
`
const GroupLabel = styled.div`
    flex: 1;
    text-align: center;
`
const Launcher = styled.button`
    width: 18px;
    padding-top: 6px;
`
const BigButton = styled.button`
    display: flex;
    flex-direction: column;
    align-items: center;
    width: ${(p) => p.$w}px;
    padding-top: 4px;
    line-height: 18px;

    > svg:first-child {
        height: 40px;
    }
    > svg:last-child {
        margin-top: 6px;
    }
`
const CaretLine = styled.span`
    display: flex;
    align-items: center;
    gap: 3px;
`
const Stack = styled.div`
    display: flex;
    flex-direction: column;
    margin: ${(p) => (p.$end ? '0 4px 0 auto' : 0)};
    padding-left: ${(p) => (p.$flush ? 1 : 4)}px;
`
const OptionButton = styled.button`
    display: flex;
    align-items: center;
    gap: 4px;
    height: 28px;
    padding: 0 2px;
    color: ${(p) => (p.$off ? GREY : '#333134')};

    span + svg {
        margin-left: ${(p) => (p.$wide ? 6 : 0)}px;
    }
`
const ToolRows = styled.div`
    display: flex;
    flex-direction: column;
    gap: 8px;
    padding-top: 9px;
`
const ToolRow = styled.div`
    display: flex;
    align-items: center;
    height: 28px;
`
const ToolButton = styled.button`
    display: flex;
    flex: none;
    align-items: center;
    justify-content: center;
    gap: 4px;
    width: ${(p) => p.$w}px;
`
const Divider = styled.div`
    width: 1px;
    height: 26px;
    margin: 0 5px;
    background: #cbc9cd;
`
const Combo = styled.div`
    position: relative;
    flex: none;
    width: ${(p) => p.$w}px;
    height: 28px;
    margin: ${(p) => (p.$margin ? '0 5px' : '0 0 0 -1px')};

    &:first-child {
        margin-left: 0;
    }

    select {
        width: 100%;
        height: 100%;
        padding-left: 5px;
        appearance: none;
        border: 1px solid #c3c1c5;
        background: #fcfcfd;
        color: ${GREY};
    }
    svg {
        position: absolute;
        right: 4px;
        top: 11px;
        pointer-events: none;
    }
`
const Gallery = styled.div`
    display: flex;
    width: 165px;
    height: 75px;
    margin: 4px 4px 0 2px;
    border: 1px solid #b9b7bb;
    background: #fcfcfd;
`
const ShapeGrid = styled.div`
    display: grid;
    flex: 1;
    grid-template-columns: repeat(6, 1fr);
    padding: 0 1px;
`
const ShapeButton = styled.button`
    display: grid;
    place-items: center;
`
const GalleryScroll = styled.div`
    display: flex;
    flex-direction: column;
    width: 17px;
    border-left: 1px solid #b9b7bb;

    button {
        display: grid;
        flex: 1;
        place-items: center;
    }
    button + button {
        border-top: 1px solid #b9b7bb;
    }
`
const Collapse = styled.button`
    align-self: flex-end;
    margin: 0 11px 6px auto;
`
const QuickBar = styled.section`
    display: flex;
    flex: none;
    align-items: center;
    height: 42px;
`
const AutoSave = styled.label`
    display: flex;
    align-items: center;
    gap: 9px;
    width: 134px;
    padding-left: 11px;
    color: #b3b1b5;

    input {
        position: absolute;
        opacity: 0;
    }
`
const Switch = styled.span`
    display: flex;
    align-items: center;
    justify-content: space-between;
    width: 45px;
    height: 20px;
    padding: 0 6px 0 5px;
    border: 2px solid #cfcdd1;
    border-radius: 10px;
    font-size: 12px;

    i {
        width: 9px;
        height: 9px;
        border-radius: 50%;
        background: #c3c1c5;
    }
`
const Workspace = styled.main`
    display: flex;
    flex: 1;
    min-height: 0;
    border-bottom: 1px solid #c5c3c7;
`
const ThumbPane = styled.aside`
    display: flex;
    width: 329px;
    border-right: 1px solid #b9b7bb;
`
const ThumbList = styled.div`
    display: flex;
    flex: 1;
    flex-direction: column;
    gap: 22px;
    padding-top: 13px;
    overflow: hidden;
`
const ThumbItem = styled.div`
    display: flex;
    flex: none;
`
const ThumbNumber = styled.div`
    display: flex;
    flex-direction: column;
    gap: 7px;
    width: 44px;
    padding-left: 5px;
    font: 19px/12px "Noto Sans", sans-serif;
    color: ${(p) => (p.$active ? '#c94b4b' : '#4f4d51')};

    svg {
        margin-left: 7px;
    }
`
// each course is h high, joints of the second course sit half a brick further
const bricks = (w, h) => `
    background-color: #fcfbfc;
    background-image:
        linear-gradient(#f0ecf1 1px, transparent 1px),
        conic-gradient(from 0deg at 1px ${h}px, transparent 75%, #efebf0 0),
        conic-gradient(from 0deg at 1px ${h}px, transparent 75%, #efebf0 0);
    background-size: 100% ${h}px, ${w}px ${h * 2}px, ${w}px ${h * 2}px;
    background-position: 0 0, 0 0, ${w / 2}px ${h}px;
`
const ThumbSlide = styled.button`
    width: 238px;
    height: 136px;
    border: 1px solid #bdbbbf;
    ${(p) => (p.$bare ? 'background: #fcfcfc;' : bricks(10, 5))}
    ${(p) => p.$active && 'border-color: #fff; outline: 4px solid #cb5552; outline-offset: -1px;'}
`
const ScrollColumn = styled.div`
    display: flex;
    flex: none;
    flex-direction: column;
    width: 17px;
    margin: 4px ${(p) => (p.$edge ? 2 : 6)}px 1px 0;
`
const ScrollButton = styled.button`
    display: grid;
    flex: none;
    place-items: center;
    height: 17px;
    border: 1px solid #bdbbbf;
    background: #fdfdfd;
`
const Track = styled.div`
    flex: ${(p) => p.$grow} 1 0;
    background: #d3d2d4;
`
const Thumb = styled.div`
    flex: ${(p) => p.$grow} 1 0;
    border: 1px solid #a9a7ab;
    background: #fdfdfd;
`
const PageButtons = styled.div`
    display: flex;
    flex-direction: column;
    gap: 9px;
    height: 68px;
    padding-top: 7px;
`
const Stage = styled.div`
    display: grid;
    flex: 1;
    place-items: center;
    padding: 0 0 4px 2px;
`
const Slide = styled.article`
    position: relative;
    width: 1154px;
    height: 650px;
    border: 1px solid #c5c3c7;
    ${bricks(12, 6)}
`
const SlideTitle = styled.h1`
    position: absolute;
    left: 35px;
    top: 45px;
    margin: 0;
    font-size: 22px;
    line-height: 30px;
    color: #0c0c0c;
`
const SpacedRow = styled.div`
    display: flex;
    gap: ${(p) => p.$gap}px;
`
const Line = styled.i`
    position: absolute;
    left: ${(p) => p.$x}px;
    top: ${(p) => p.$y}px;
    width: ${(p) => p.$w}px;
    height: ${(p) => p.$h}px;
    background: ${(p) => p.$c || '#b5b3b7'};
`
const Mark = styled.i`
    position: absolute;
    left: ${(p) => p.$x}px;
    top: ${(p) => p.$y}px;
    width: 8px;
    height: 8px;
    background:
        linear-gradient(${(p) => p.$c}, ${(p) => p.$c}) center / 2px 100% no-repeat,
        linear-gradient(${(p) => p.$c}, ${(p) => p.$c}) center / 100% 2px no-repeat;
`
const ChartFrame = styled.div`
    position: absolute;
    left: 54px;
    top: 144px;
    width: 397px;
    height: 360px;
    border: 2px solid #0c0c0c;
    background: #fcfcfc;
`
const Selection = styled.svg`
    position: absolute;
    left: 500px;
    top: 143px;
    width: 270px;
    height: 320px;
`
const SideLetters = styled.div`
    position: absolute;
    left: 1106px;
    top: 151px;
    width: 20px;
    text-align: center;
`
const SideLetter = styled.div`
    height: 43px;
    font: 500 11px/20px "Noto Sans", sans-serif;
    color: ${(p) => (p.$lit ? CYAN : '#222')};
`
const Caption = styled.div`
    position: absolute;
    left: 33px;
    top: 545px;
    display: flex;
    flex-direction: column;
    font-size: 16px;
    line-height: 22px;
    color: #222;

    strong {
        font-size: 18px;
        font-weight: 900;
        line-height: 24px;
        color: #22b4dc;
    }
`
const StatusBar = styled.footer`
    display: flex;
    flex: none;
    align-items: center;
    height: 24px;
    margin-top: 3px;
    padding: 0 7px 2px 10px;
    background: #dad8dc;
    color: #222;
`
const Spring = styled.div`
    flex: 1;
`
const NotesButton = styled.button`
    display: flex;
    align-items: center;
    gap: 6px;
    margin-right: 22px;
`
const ViewButton = styled.button`
    display: grid;
    place-items: center;
    width: 46px;
    height: 24px;
    background: ${(p) => (p.$active ? '#b4b2b6' : 'none')};
`
const ZoomButton = styled.button`
    display: grid;
    place-items: center;
    min-width: 10px;
`
const ZoomSlider = styled.input`
    width: 119px;
    height: 16px;
    margin: 0 5px;
    appearance: none;
    background:
        linear-gradient(#555, #555) center / 1px 7px no-repeat,
        linear-gradient(#666, #666) center / 100% 1px no-repeat;

    &::-webkit-slider-thumb {
        appearance: none;
        width: 6px;
        height: 14px;
        background: #333;
    }
`
const ZoomValue = styled.span`
    width: 58px;
    padding-left: 13px;
`
const Watermark = styled.div`
    position: absolute;
    right: 68px;
    bottom: 41px;
    display: flex;
    align-items: center;
    gap: 20px;
    color: #27aae1;
    -webkit-text-stroke: 5px #fbfdfe;
    paint-order: stroke fill;
`
const WatermarkText = styled.div`
    display: flex;
    flex-direction: column;
    align-items: flex-end;
`
const WatermarkTop = styled.div`
    display: flex;
    align-items: flex-end;
    height: 52px;
`
const Slogan = styled.span`
    display: flex;
    align-items: center;
    font-size: 27px;
    line-height: 34px;
    color: #3aa0d8;
`
const Dash = styled.i`
    width: 36px;
    height: 3px;
    margin: 0 8px;
    background: #27aae1;
    box-shadow: 0 0 0 2px #fbfdfe;
`
const Brand = styled.div`
    display: flex;
    gap: ${(p) => p.$gap}px;
    font-size: 48px;
    font-weight: 900;
    font-style: italic;
    line-height: 52px;
`
const Site = styled.div`
    display: flex;
    gap: ${(p) => p.$gap}px;
    font: 700 46px/48px "Liberation Sans", sans-serif;
`
const WatermarkBar = styled.i`
    width: 6px;
    height: 74px;
    background: #27aae1;
    box-shadow: 0 0 0 2px #fbfdfe;
`
const Player = styled.div`
    position: absolute;
    left: 0;
    right: 0;
    bottom: 0;
    display: flex;
    flex-direction: column;
    height: 100px;
    padding: 43px 20px 0;
    background: linear-gradient(rgba(0, 0, 0, 0), rgba(0, 0, 0, 0.58));
`
const Progress = styled.input`
    width: 100%;
    height: 6px;
    appearance: none;
    background: linear-gradient(90deg, #1489e2 0 76.5%, rgba(225, 225, 225, 0.25) 76.5% 82.5%, #e6e6e6 82.5%);

    &::-webkit-slider-thumb {
        appearance: none;
        width: 1px;
        height: 6px;
    }
`
const PlayerRow = styled.div`
    display: flex;
    align-items: center;
    height: 40px;
    padding-left: 4px;
    margin-right: -2px;
    color: #f3f3f3;
    font-size: 14px;
`
const PlayerButton = styled.button`
    display: grid;
    place-items: center;
    width: ${(p) => p.$w}px;
    font-weight: 300;
`
const Time = styled.span`
    padding-left: 20px;
    font: 14px/20px "Noto Sans", sans-serif;
`
const Pointer = styled.svg`
    position: absolute;
    left: 1313px;
    top: 1044px;
    width: 12px;
    height: 20px;
`
